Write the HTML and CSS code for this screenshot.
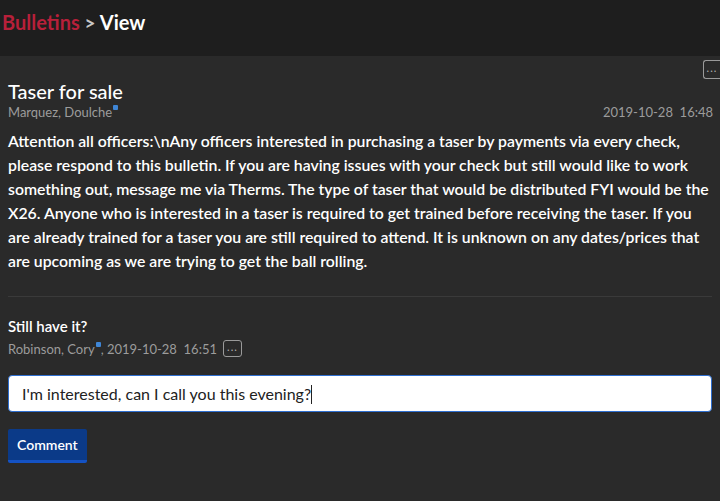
FILE: index.html
```html
<!DOCTYPE html>
<html lang="en">
<head>
    <meta charset="UTF-8">
    <title>Bulletins - View</title>
    <link rel="stylesheet" href="styles.css">
</head>
<body>
    <!-- Cabeçalho -->
    <header class="topbar">
        <h1><span class="crumb">Bulletins</span> <span class="sep">&gt;</span> View</h1>
    </header>

    <main class="bulletin">
        <div class="bulletin-head">
            <h2>Taser for sale</h2>
            <button class="more more-top">...</button>
        </div>
        <div class="meta-row">
            <span class="author">Marquez, Doulche<span class="dot"></span></span>
            <span class="stamp">2019-10-28&nbsp;&nbsp;16:48</span>
        </div>
        <p class="content">Attention all officers:\nAny officers interested in purchasing a taser by payments via every check, please respond to this bulletin. If you are having issues with your check but still would like to work something out, message me via Therms. The type of taser that would be distributed FYI would be the X26. Anyone who is interested in a taser is required to get trained before receiving the taser. If you are already trained for a taser you are still required to attend. It is unknown on any dates/prices that are upcoming as we are trying to get the ball rolling.</p>

        <hr class="divider">

        <!-- Comentários -->
        <div class="comment">
            <div class="comment-text">Still have it?</div>
            <div class="comment-meta">
                <span>Robinson, Cory<span class="dot"></span>, 2019-10-28&nbsp;&nbsp;16:51</span>
                <button class="more">...</button>
            </div>
        </div>

        <form class="reply">
            <div class="reply-field">I'm interested, can I call you this evening?<span class="caret"></span></div>
            <button type="button" class="reply-button">Comment</button>
        </form>
    </main>
</body>
</html>
```

FILE: styles.css
```css
body {
    margin: 0;
    background-color: #2a2a2a;
    font-family: Lato, "Noto Sans", sans-serif;
    color: #ffffff;
    height: 501px;
    overflow: hidden;
}

.topbar {
    background-color: #1e1e1e;
    height: 56px;
    box-sizing: border-box;
    padding: 9px 2px 0;
}

.topbar h1 {
    margin: 0;
    font-size: 20px;
    font-weight: 700;
    line-height: 26px;
}

.crumb {
    color: #b8203a;
}

.sep {
    color: #c8c8c8;
    font-size: 19px;
}

.bulletin {
    padding: 0 8px;
}

.bulletin-head {
    display: flex;
    justify-content: space-between;
    align-items: flex-start;
    margin-right: -8px;
}

.bulletin-head h2 {
    margin: 22px 0 0;
    font-size: 20px;
    font-weight: 500;
    line-height: 26px;
}

.more {
    background: none;
    border: 1px solid #9a9a9a;
    border-radius: 3px;
    color: #b0b0b0;
    font-family: Lato, sans-serif;
    font-size: 11px;
    line-height: 10px;
    padding: 0 2px 4px;
    height: 17px;
    width: 19px;
    letter-spacing: 1px;
    cursor: pointer;
}

.more-top {
    margin-top: 4px;
    border-right: none;
    border-radius: 3px 0 0 3px;
    width: 17px;
    height: 19px;
}

.meta-row {
    display: flex;
    justify-content: space-between;
    font-size: 13px;
    color: #9c9c9c;
    line-height: 16px;
    margin-top: 0;
}

.stamp {
    margin-right: -1px;
}

.dot {
    display: inline-block;
    width: 5px;
    height: 5px;
    border-radius: 1px;
    background-color: #3f86d6;
    vertical-align: 7px;
    margin-left: 1px;
}

.content {
    margin: 9px 0 0;
    font-size: 15.8px;
    line-height: 24px;
    font-weight: 600;
}

.divider {
    border: none;
    border-top: 1px solid #3a3a3a;
    margin: 23px 0 0;
}

.comment {
    margin-top: 20px;
}

.comment-text {
    font-size: 15px;
    font-weight: 600;
    line-height: 18px;
}

.comment-meta {
    display: flex;
    align-items: center;
    gap: 6px;
    font-size: 13px;
    color: #9c9c9c;
    margin-top: 5px;
}

.reply {
    margin-top: 18px;
}

.reply-field {
    box-sizing: border-box;
    height: 37px;
    border: 1px solid #2f6fd0;
    border-radius: 4px;
    background-color: #ffffff;
    font-size: 16px;
    line-height: 35px;
    color: #222222;
    padding: 0 13px;
}

.caret {
    display: inline-block;
    width: 1px;
    height: 19px;
    background-color: #222222;
    vertical-align: -4px;
}

.reply-button {
    margin-top: 17px;
    background-color: #0b3a88;
    border: none;
    border-bottom: 3px solid #1452c4;
    border-radius: 2px;
    color: #ffffff;
    font-family: Lato, sans-serif;
    font-size: 14px;
    font-weight: 600;
    height: 34px;
    padding: 0 9px;
    cursor: pointer;
}
```
